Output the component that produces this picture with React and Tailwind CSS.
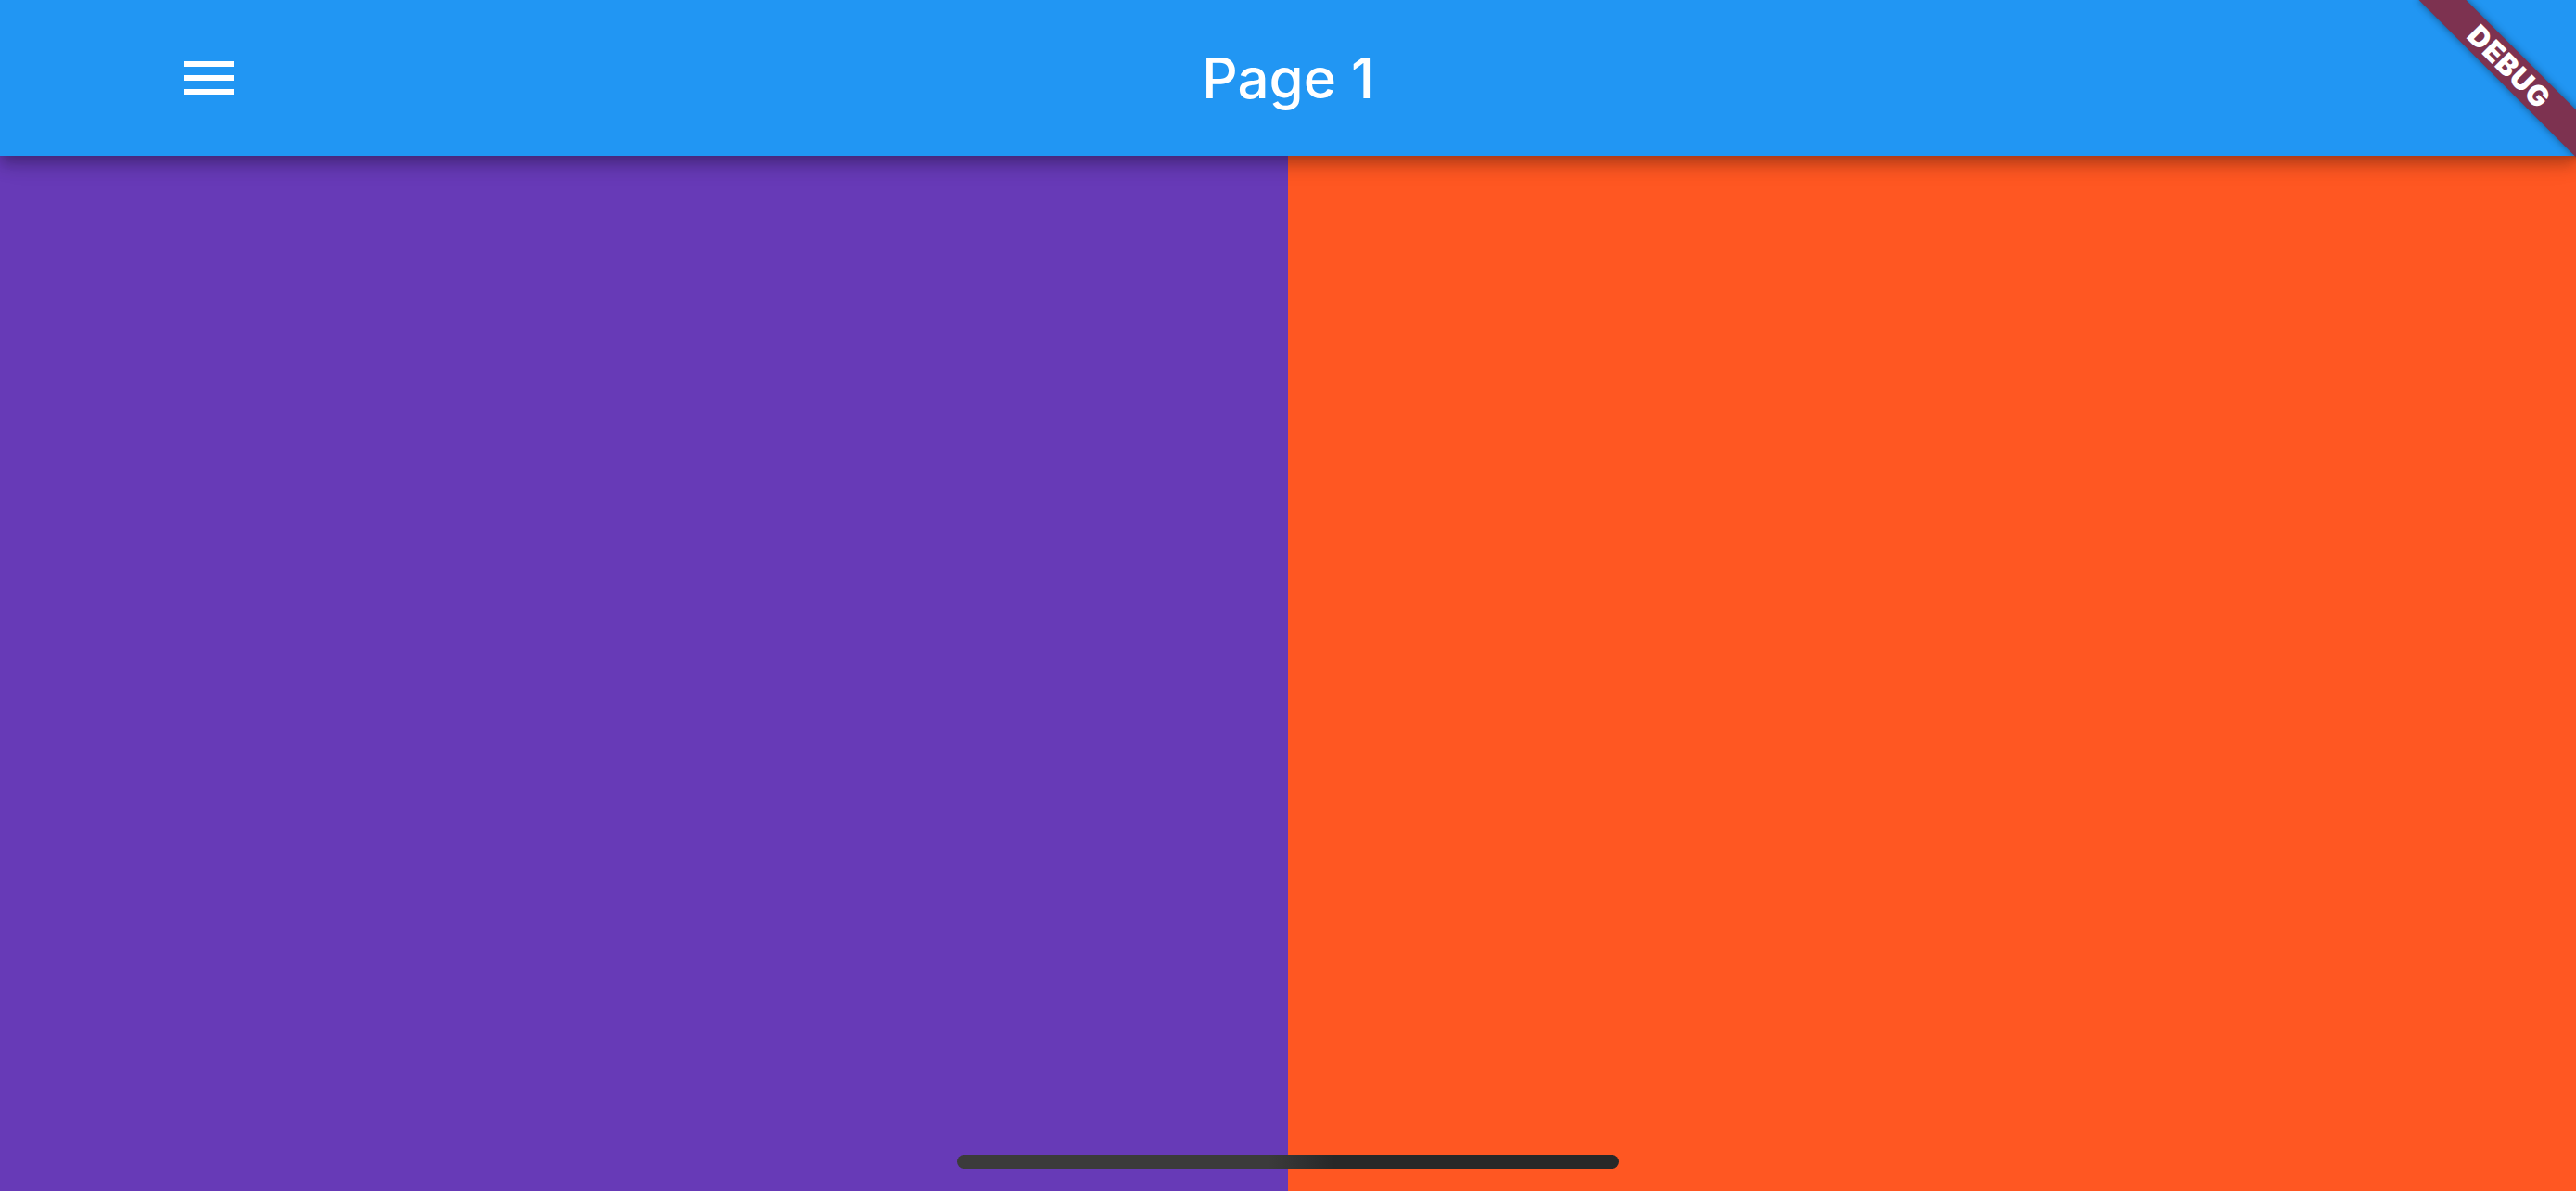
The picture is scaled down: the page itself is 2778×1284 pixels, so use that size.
const MenuIcon = () => (
  <svg width="72" height="72" viewBox="0 0 24 24" fill="#ffffff">
    <path d="M3 18h18v-2H3v2zm0-5h18v-2H3v2zm0-7v2h18V6H3z" />
  </svg>
);

export default function App() {
  return (
    <div className="relative w-[2778px] h-[1284px] overflow-hidden flex flex-col font-['Inter',sans-serif]">
      {/* app bar */}
      <header className="relative z-10 h-[168px] shrink-0 bg-[#2196F3] flex items-center justify-center shadow-[0_6px_12px_-3px_rgba(0,0,0,0.2),0_12px_15px_0_rgba(0,0,0,0.14),0_3px_30px_0_rgba(0,0,0,0.12)]">
        <button className="absolute left-[189px] top-[48px] w-[72px] h-[72px]">
          <MenuIcon />
        </button>
        <h1 className="text-[60px] font-medium text-white leading-normal">Page 1</h1>
      </header>

      {/* body */}
      <main className="flex-1 flex">
        <div className="flex-1 bg-[#673AB7]"></div>
        <div className="flex-1 bg-[#FF5722]"></div>
      </main>

      {/* home indicator */}
      <div className="absolute left-[1032px] top-[1245px] w-[714px] h-[15px] rounded-full bg-[linear-gradient(to_right,#3b3b3b_0%,#3b3b3b_47%,#282828_57%,#282828_100%)]"></div>

      {/* debug banner */}
      <div className="absolute z-20 right-[-48px] top-[54px] w-[240px] h-[36px] rotate-45 bg-[#7d3250] shadow-[0_0_8px_rgba(0,0,0,0.45)] flex items-center justify-center">
        <span className="text-[30.6px] leading-none font-black text-white tracking-[1px]">DEBUG</span>
      </div>
    </div>
  );
}
